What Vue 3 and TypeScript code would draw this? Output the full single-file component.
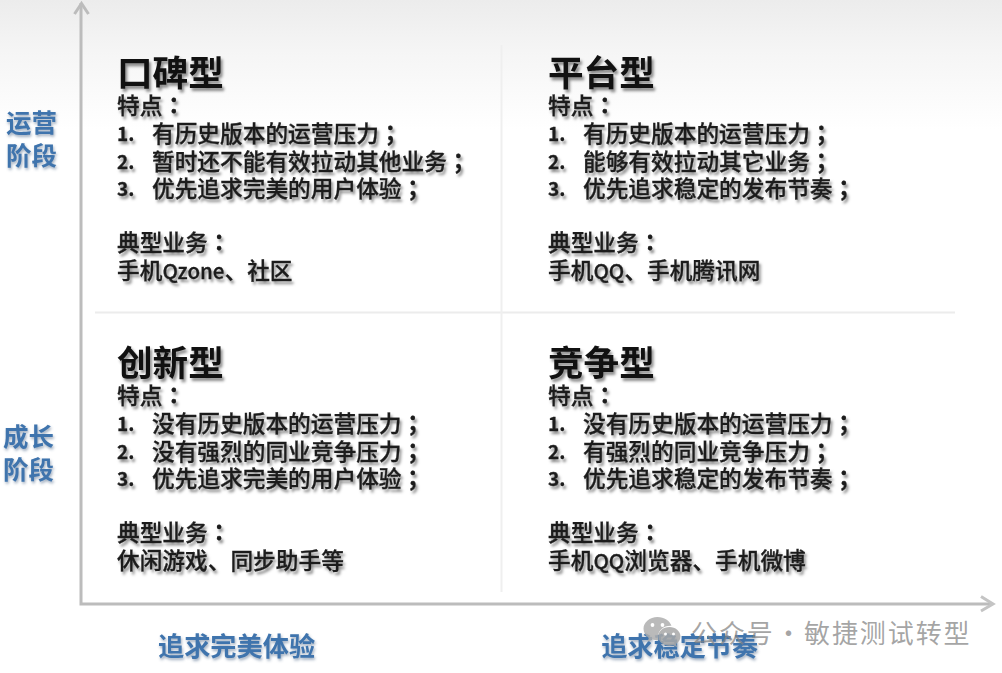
<script setup lang="ts">
interface Quadrant {
  title: string
  points: string[]
  business: string
}

const quadrants: Quadrant[] = [
  {
    title: '口碑型',
    points: ['有历史版本的运营压力', '暂时还不能有效拉动其他业务', '优先追求完美的用户体验'],
    business: '手机Qzone、社区',
  },
  {
    title: '平台型',
    points: ['有历史版本的运营压力', '能够有效拉动其它业务', '优先追求稳定的发布节奏'],
    business: '手机QQ、手机腾讯网',
  },
  {
    title: '创新型',
    points: ['没有历史版本的运营压力', '没有强烈的同业竞争压力', '优先追求完美的用户体验'],
    business: '休闲游戏、同步助手等',
  },
  {
    title: '竞争型',
    points: ['没有历史版本的运营压力', '有强烈的同业竞争压力', '优先追求稳定的发布节奏'],
    business: '手机QQ浏览器、手机微博',
  },
]

// Odd indexes of the split are the Latin runs, set smaller as in the reference.
const segments = (text: string): string[] => text.split(/([A-Za-z]+)/)
</script>

<template>
  <div class="page">
    <div class="top">
      <div class="y-labels">
        <div class="y-label y-upper">运营<br />阶段</div>
        <div class="y-label y-lower">成长<br />阶段</div>
      </div>
      <div class="plot">
        <section v-for="q in quadrants" :key="q.title" class="quadrant">
          <h2 class="title">{{ q.title }}</h2>
          <p class="line">特点<span class="punct">：</span></p>
          <ol class="points">
            <li v-for="(point, i) in q.points" :key="point" class="line point">
              <span class="num">{{ i + 1 }}.</span>
              <span>{{ point }}<span class="punct">；</span></span>
            </li>
          </ol>
          <p class="line biz-head">典型业务<span class="punct">：</span></p>
          <p class="line biz">
            <span
              v-for="(seg, i) in segments(q.business)"
              :key="i"
              :class="{ latin: i % 2 === 1 }"
            >{{ seg }}</span>
          </p>
        </section>
      </div>
    </div>
    <div class="x-labels">
      <span class="x-label">追求完美体验</span>
      <span class="x-label">追求稳定节奏</span>
    </div>

    <svg class="axes" width="1002" height="673" viewBox="0 0 1002 673" fill="none">
      <line x1="95" y1="312.5" x2="955" y2="312.5" stroke="#ececec" stroke-width="2" />
      <line x1="501.5" y1="45" x2="501.5" y2="592" stroke="#efefef" stroke-width="2" />
      <path d="M81 3V604H992" stroke="#bcbcbc" stroke-width="3" />
      <path d="M74.5 14L81.5 3.5L88.5 14" stroke="#bcbcbc" stroke-width="3" />
      <path d="M981 596.5L993 604L981 611" stroke="#c4c4c4" stroke-width="3" />
    </svg>

    <div class="watermark">
      <svg class="wx" width="38" height="34" viewBox="0 0 38 34">
        <path d="M14.5 1C6.8 1 .5 6.2.5 12.7c0 3.7 2.1 7 5.3 9.2L4.5 26l4.9-2.5c1.6.5 3.3.7 5.1.7h1.2c-.4-1.2-.6-2.4-.6-3.7 0-6 5.5-10.8 12.3-10.8h1.1C26.8 4.7 21.2 1 14.5 1z" fill="#aeaeae" />
        <path d="M37.5 20.3c0-5.2-5.1-9.4-11-9.4-6.3 0-11.3 4.2-11.3 9.4s5 9.4 11.3 9.4c1.3 0 2.6-.2 3.8-.5l3.8 2.1-1-3.4c3-2 4.4-4.6 4.4-7.6z" fill="#a8a8a8" />
        <circle cx="9.5" cy="9" r="1.9" fill="#fff" />
        <circle cx="19.5" cy="9" r="1.9" fill="#fff" />
        <circle cx="22.5" cy="18" r="1.5" fill="#fff" />
        <circle cx="30.5" cy="18" r="1.5" fill="#fff" />
      </svg>
      <span class="wm-text">公众号 · 敏捷测试转型</span>
    </div>
  </div>
</template>

<style scoped>
.page {
  position: relative;
  width: 1002px;
  height: 673px;
  overflow: hidden;
  background: linear-gradient(to bottom, #ececec 0, #f5f5f5 50px, #fcfcfc 105px, #fff 130px);
  font-family: "Noto Sans CJK SC", "Liberation Sans", sans-serif;
  color: #1c1c1c;
}
.top {
  display: flex;
  height: 604px;
}
.y-labels {
  position: relative;
  flex: 0 0 81px;
  display: flex;
  flex-direction: column;
}
.y-label {
  font-size: 25.5px;
  line-height: 33px;
  font-weight: 700;
  color: #3f74ad;
  text-shadow: 1px 2px 3px rgba(40, 70, 110, .45);
  filter: blur(.7px);
}
.y-upper {
  margin: 104px 0 0 6px;
}
.y-lower {
  margin: 248px 0 0 3px;
}
.plot {
  flex: 1;
  display: grid;
  grid-template-columns: 431px 1fr;
  grid-auto-rows: 290px;
  padding: 49px 0 0 36px;
}
.quadrant {
  min-width: 0;
}
.title {
  margin: 0 0 -2px;
  font-size: 35.6px;
  line-height: 44px;
  font-weight: 700;
  color: #111;
  text-shadow: 2px 3px 3px rgba(0, 0, 0, .45);
  filter: blur(.6px);
}
.line {
  margin: 0;
  font-size: 22.7px;
  line-height: 27.4px;
  font-weight: 500;
  white-space: nowrap;
  -webkit-text-stroke: .3px #1c1c1c;
  text-shadow: 2px 3px 3px rgba(0, 0, 0, .5);
  filter: blur(.7px);
}
.punct {
  font-family: "Noto Sans CJK JP", sans-serif;
  font-weight: 700;
}
.points {
  margin: 1px 0 0;
  padding: 0;
  list-style: none;
}
.point {
  display: flex;
}
.num {
  flex: 0 0 35px;
  font-size: 19px;
  font-weight: 700;
}
.biz-head {
  margin-top: 26.4px;
}
.biz {
  margin-top: 1px;
}
.latin {
  font-size: 20.5px;
}
.x-labels {
  display: flex;
  padding: 24px 0 0 158px;
  gap: 286px;
}
.x-label {
  font-size: 26.2px;
  line-height: 34px;
  font-weight: 700;
  color: #3f74ad;
  text-shadow: 1px 2px 3px rgba(40, 70, 110, .45);
  filter: blur(.7px);
}
.axes {
  position: absolute;
  left: 0;
  top: 0;
  pointer-events: none;
  filter: blur(.4px);
}
.watermark {
  position: absolute;
  left: 643px;
  top: 616px;
  display: flex;
  align-items: center;
  gap: 10px;
}
.wx {
  opacity: .85;
}
.wm-text {
  margin-top: -3px;
  font-size: 26px;
  line-height: 34px;
  letter-spacing: 1.9px;
  word-spacing: -7px;
  color: rgba(130, 130, 130, .72);
  white-space: nowrap;
  font-weight: 400;
}
</style>
